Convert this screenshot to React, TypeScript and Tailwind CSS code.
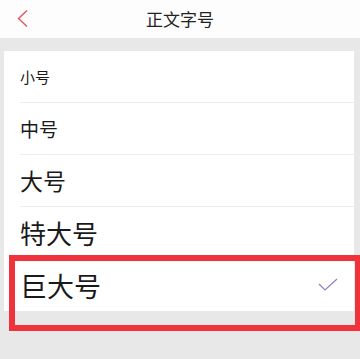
import React from "react";

const rows = [
  { label: "小号", cls: "text-[15px]" },
  { label: "中号", cls: "text-[19px]" },
  { label: "大号", cls: "text-[23px]" },
  { label: "特大号", cls: "text-[26px]" },
];

export default function App() {
  return (
    <div
      className="w-[360px] h-[359px] bg-[#e8e8e8] overflow-hidden"
      style={{ fontFamily: '"Noto Sans CJK SC", "Noto Sans", sans-serif' }}
    >
      <div className="h-[38px] bg-[#fdfdfd] relative flex items-center justify-center">
        <svg className="absolute left-[16px] top-[9px]" width="14" height="19" viewBox="0 0 14 19">
          <path d="M11 1.5 L2.5 9.5 L11 17.5" fill="none" stroke="#e2545c" strokeWidth="1.4" />
        </svg>
        <span className="text-[17px] text-[#222]">正文字号</span>
      </div>
      <div className="mt-[13px] mx-[4px] w-[350px] bg-white">
        {rows.map((r) => (
          <div key={r.label} className="h-[52px] ml-[16px] border-b border-[#ececec] flex items-center">
            <span className={`${r.cls} text-[#1a1a1a] leading-none`}>{r.label}</span>
          </div>
        ))}
        <div className="h-[52px] pl-[16px] pr-[16px] flex items-center justify-between">
          <span className="text-[27px] text-[#1a1a1a] leading-none">巨大号</span>
          <svg width="20" height="14" viewBox="0 0 20 14">
            <path d="M1 6 L7 12 L19 1" fill="none" stroke="#8a80c8" strokeWidth="1.2" />
          </svg>
        </div>
      </div>
      <div className="absolute left-[9px] top-[255px] w-[352px] h-[76px] border-[6px] border-[#f0323a]" />
    </div>
  );
}
